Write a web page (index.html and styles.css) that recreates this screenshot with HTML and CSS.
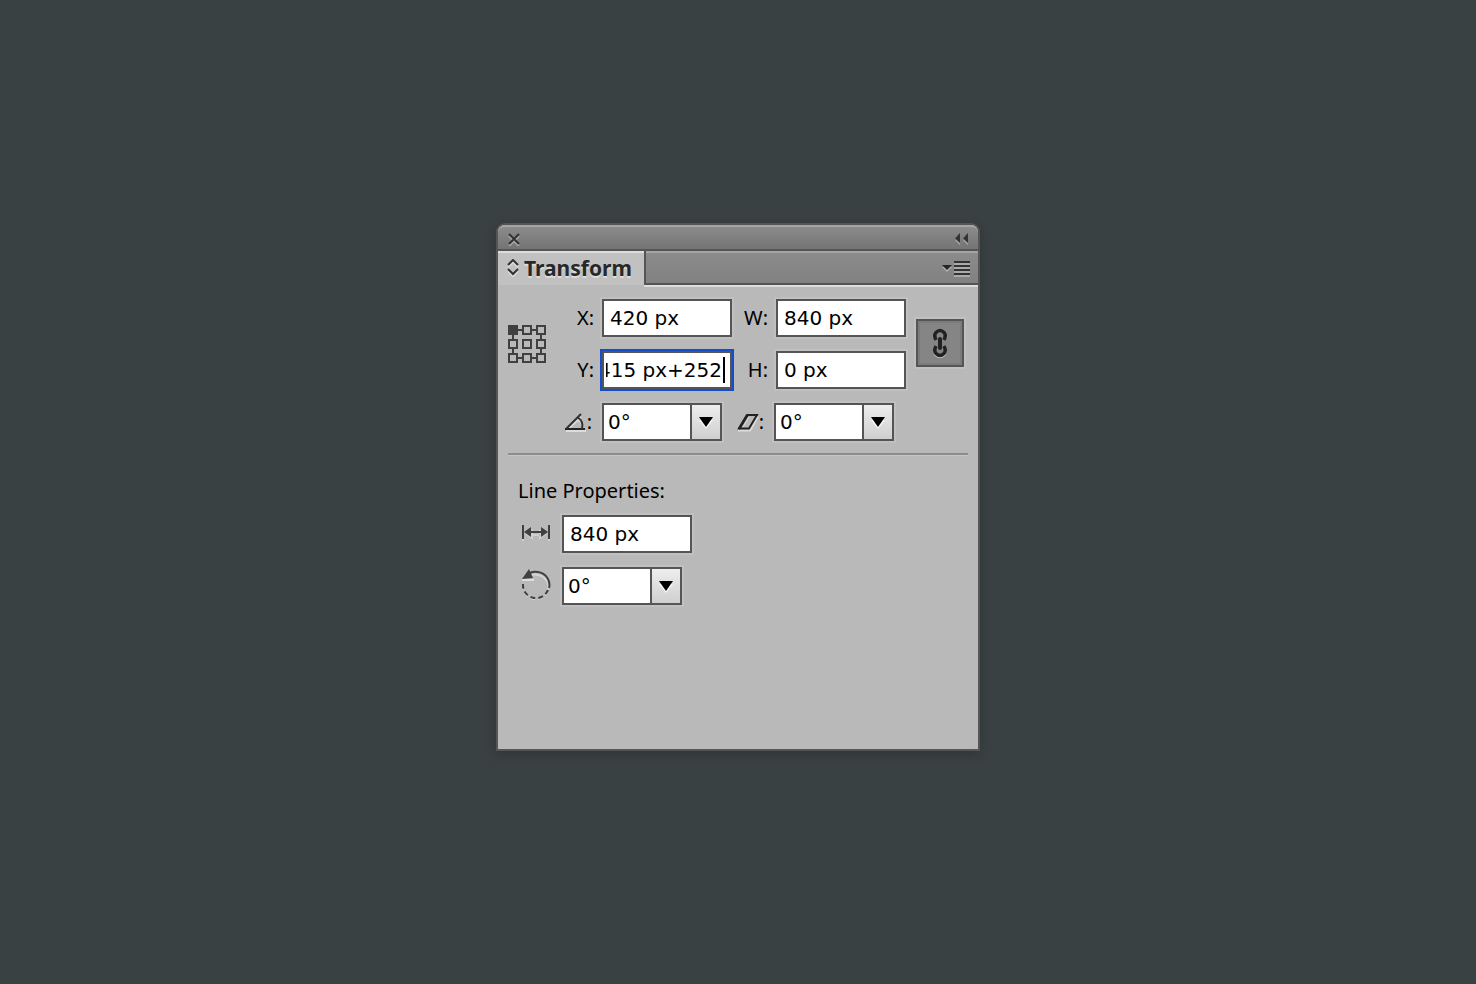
FILE: index.html
```html
<!DOCTYPE html>
<html lang="en">
<head>
<meta charset="utf-8">
<title>Transform</title>
<link rel="stylesheet" href="styles.css">
</head>
<body>
<main class="panel">
  <header class="titlebar">
    <button class="icon-button" type="button" aria-label="Close">
      <svg width="14" height="14" viewBox="0 0 14 14" fill="none" stroke-width="2"><path d="M2 4l10 10M12 4L2 14" stroke="#aaa"/><path d="M2 2l10 10M12 2L2 12" stroke="#333"/></svg>
    </button>
    <button class="icon-button" type="button" aria-label="Collapse">
      <svg width="15" height="12" viewBox="0 0 15 12"><path d="M6 2v10L1 7zM14 2v10L9 7z" fill="#aaa"/><path d="M6 0v10L1 5.500zM14 0v10L9 5.500z" fill="#333"/></svg>
    </button>
  </header>
  <div class="tabbar">
    <button class="tab" type="button">
      <svg width="12" height="18" viewBox="0 0 12 18" fill="none" stroke-width="2"><path d="M1 8l5-5 5 5M1 12l5 5 5-5" stroke="#ddd"/><path d="M1 6l5-5 5 5M1 10l5 5 5-5" stroke="#333"/></svg>
      Transform
    </button>
    <div class="tab-rest">
      <button class="icon-button" type="button" aria-label="Panel menu">
        <svg width="28" height="16" viewBox="0 0 28 16"><path d="M0 6h10L5 11z" fill="#b0b0b0"/><path d="M0 4h10L5 9z" fill="#262626"/><path d="M12 0h16v16H12z" fill="#aaa"/><path d="M12 0h16v2H12zM12 4h16v2H12zM12 8h16v2H12zM12 12h16v2H12z" fill="#333"/></svg>
      </button>
    </div>
  </div>

  <section class="transform">
    <button class="icon-button reference-point" type="button" aria-label="Reference point">
      <svg width="38" height="38" viewBox="0 0 38 38" fill="none" stroke="#404040" stroke-width="2"><path d="M10 5h4M24 5h4M10 33h4M24 33h4M5 10v4M5 24v4M33 10v4M33 24v4"/><path d="M1 1h8v8H1z" fill="#404040"/><path d="M15 1h8v8h-8zM29 1h8v8h-8zM1 15h8v8H1zM15 15h8v8h-8zM29 15h8v8h-8zM1 29h8v8H1zM15 29h8v8h-8zM29 29h8v8h-8z"/></svg>
    </button>
    <div class="fields">
      <div class="row">
        <label class="label" for="x">X:</label>
        <input class="field" id="x" type="text" value="420 px">
        <label class="label" for="w">W:</label>
        <input class="field" id="w" type="text" value="840 px">
      </div>
      <div class="row">
        <label class="label" for="y">Y:</label>
        <span class="editing">
          <input class="field field-active" id="y" type="text" value="415 px+252">
          <span class="caret"></span>
        </span>
        <label class="label" for="h">H:</label>
        <input class="field" id="h" type="text" value="0 px">
      </div>
      <div class="row row-angles">
        <label class="label" for="rotate" aria-label="Rotate">
          <svg width="22" height="20" viewBox="0 0 22 20" fill="none"><path d="M1 19h20M3 17L16 5M13 8q5 3 4 9" stroke="#ddd" stroke-width="2"/><path d="M0 17h20" stroke="#222" stroke-width="2"/><path d="M1 17L16 2M12 5q7 4 5 12" stroke="#333" stroke-width="2"/></svg>:
        </label>
        <span class="combo"><select id="rotate"><option>0°</option></select><svg class="arrow" width="14" height="12" viewBox="0 0 14 12"><path d="M0 3h14L7 12z" fill="#f8f8f8"/><path d="M0 0h14L7 10z"/></svg></span>
        <label class="label" for="shear" aria-label="Shear">
          <svg width="22" height="20" viewBox="0 0 22 20" fill="none"><path d="M1 18.500h12l8-14" stroke="#ddd" stroke-width="2"/><path d="M2 16.500L10 3h10l-8 13.500z" stroke="#222" stroke-width="2"/><path d="M2 17l8.500-14" stroke="#222" stroke-width="2.500"/><path d="M6 15l6-10" stroke="#ddd"/></svg>:
        </label>
        <span class="combo"><select id="shear"><option>0°</option></select><svg class="arrow" width="14" height="12" viewBox="0 0 14 12"><path d="M0 3h14L7 12z" fill="#f8f8f8"/><path d="M0 0h14L7 10z"/></svg></span>
      </div>
    </div>
    <button class="link" type="button" aria-pressed="true" aria-label="Constrain proportions">
      <svg width="20" height="32" viewBox="0 0 20 32" fill="none"><path d="M4.500 21a5.500 5.500 0 1 0 11 0" transform="translate(0 3)" stroke="#d5d5d5" stroke-width="3"/><path d="M6 13Q3.500 8 6 5.500q4-4 8 0Q16.500 8 14 13M6 19q-2.500 5 0 7.500q4 4 8 0q2.500-2.500 0-7.500" stroke="#222" stroke-width="3.500"/><path d="M10 12v9" stroke="#222" stroke-width="4" stroke-linecap="round"/></svg>
    </button>
  </section>

  <section class="line-properties">
    <h2 class="heading">Line Properties:</h2>
    <div class="row">
      <label class="label" for="length" aria-label="Line length"><svg width="30" height="20" viewBox="0 0 30 20"><path d="M1 3h2v14H1zM27 3h2v14h-2zM4 10l8-5v11zM26 10l-8-5v11zM11 10h8v2h-8z" fill="#d0d0d0"/><path d="M1 1h2v14H1zM27 1h2v14h-2zM9 7h12v2H9z" fill="#404040"/><path d="M3 8l7-5v10z" fill="#404040"/><path d="M27 8l-7-5v10z" fill="#404040"/></svg></label>
      <input class="field" id="length" type="text" value="840 px">
    </div>
    <div class="row">
      <label class="label" for="angle" aria-label="Line angle"><svg width="30" height="36" viewBox="0 0 30 36" fill="none"><g stroke="#d4d4d4" stroke-width="2"><path d="M10 7q4-1 7 0c7 1 12 8 10 15"/><path d="M27 23A13 13 0 0 1 2 18" stroke-dasharray="5 3"/></g><path d="M1 12h12" stroke="#ddd" stroke-width="2"/><path d="M9 5q4-2 8-1c8 1 13 9 11 16" stroke="#404040" stroke-width="2"/><path d="M27 22A13 13 0 0 1 2 16" stroke="#404040" stroke-width="2" stroke-dasharray="5 3"/><path d="M1 11L8 1l4 9z" fill="#404040"/></svg></label>
      <span class="combo"><select id="angle"><option>0°</option></select><svg class="arrow" width="14" height="12" viewBox="0 0 14 12"><path d="M0 3h14L7 12z" fill="#f8f8f8"/><path d="M0 0h14L7 10z"/></svg></span>
    </div>
  </section>
</main>
<script src="script.js"></script>
</body>
</html>
```
FILE: styles.css
```css
* { box-sizing: border-box; }

body {
  margin: 0;
  min-height: 100vh;
  display: flex;
  justify-content: center;
  align-items: center;
  padding-bottom: 10px;
  background: #3a4143;
  color: #000;
  font: 20px/28px "Noto Sans", "Open Sans", sans-serif;
}

button, input, select { font: inherit; color: inherit; }

.panel {
  width: 484px;
  max-width: 100%;
  min-height: 528px;
  border: 2px solid #555;
  border-radius: 9px 9px 0 0;
  background: #b9b9b9;
  box-shadow: 0 3px 12px rgba(0, 0, 0, 0.2);
}

.icon-button {
  display: flex;
  padding: 0;
  border: 0;
  background: none;
}

.titlebar {
  display: flex;
  justify-content: space-between;
  align-items: center;
  height: 26px;
  padding: 2px 9px 0;
  border-top: 2px solid #a5a5a5;
  border-bottom: 2px solid #555;
  border-radius: 7px 7px 0 0;
  background: linear-gradient(#8b8b8b, #747474);
}

.tabbar { display: flex; height: 34px; }

.tab {
  display: flex;
  align-items: center;
  gap: 5px;
  padding: 0 12px 2px 9px;
  border: 0;
  border-top: 2px solid #ddd;
  background: #c1c1c1;
  color: #282828;
  font-size: 21px;
  font-weight: 700;
  text-shadow: 0 2px 0 #ddd;
}

.tab-rest {
  flex: 1;
  display: flex;
  align-items: center;
  justify-content: flex-end;
  padding: 4px 8px 0 0;
  border-left: 2px solid #555;
  border-bottom: 2px solid #555;
  background: linear-gradient(#a5a5a5 2px, #8b8b8b 2px, #818181);
  box-shadow: 0 2px 0 #ddd;
}

.transform {
  display: flex;
  align-items: flex-start;
  margin: 0 10px;
  padding: 14px 0 12px;
  border-bottom: 2px solid #8d8d8d;
  box-shadow: 0 1px 0 #c5c5c5;
}

.reference-point { margin-top: 26px; }

.fields {
  display: grid;
  gap: 14px;
  margin-right: 10px;
}

.row { display: flex; align-items: center; }

.label {
  display: flex;
  align-items: center;
  justify-content: flex-end;
  width: 44px;
  padding-right: 8px;
}

.label:first-child { width: 56px; }

.row-angles .label { width: 52px; padding-right: 10px; }

.row-angles .label:first-child { width: 56px; }

.field, .combo select { font-family: "DejaVu Sans", sans-serif; }

.field {
  width: 130px;
  height: 38px;
  padding: 0 6px;
  border: 2px solid #555;
  border-radius: 0;
  outline: 0;
  background: #fff;
  box-shadow: 0 0 0 2px #c0c0c0;
}

.editing { position: relative; display: flex; }

.field-active {
  padding: 0 8px 0 2px;
  box-shadow: 0 0 0 2px #124dcd;
}

.caret {
  position: absolute;
  top: 6px;
  right: 7px;
  width: 2px;
  height: 26px;
  background: #000;
}

.combo { position: relative; display: flex; }

.combo select {
  appearance: none;
  width: 120px;
  height: 38px;
  padding: 0 32px 0 4px;
  border: 2px solid #555;
  border-radius: 0;
  background:
    linear-gradient(90deg, #fff 86px, #555 86px, #555 88px, transparent 88px),
    linear-gradient(#eee, #cfcfcf);
  box-shadow: 0 0 0 2px #c0c0c0;
}

.arrow {
  position: absolute;
  top: 14px;
  right: 9px;
  pointer-events: none;
}

.link {
  display: flex;
  align-items: center;
  justify-content: center;
  width: 48px;
  height: 48px;
  margin: 20px -4px 0 0;
  padding: 0;
  border: 2px solid #555;
  background: #858585;
  box-shadow: inset 0 0 0 2px #7b7b7b, 0 0 0 2px #c0c0c0;
}

.line-properties {
  display: grid;
  gap: 14px;
  padding: 22px 20px;
}

.heading {
  margin: 0 0 -4px;
  font-size: 20px;
  font-weight: 400;
}

.line-properties .label:first-child {
  width: 44px;
  padding-right: 11px;
}
```
FILE: script.js
```javascript
const active = document.querySelector(".field-active");
active.scrollLeft = active.scrollWidth;
```
